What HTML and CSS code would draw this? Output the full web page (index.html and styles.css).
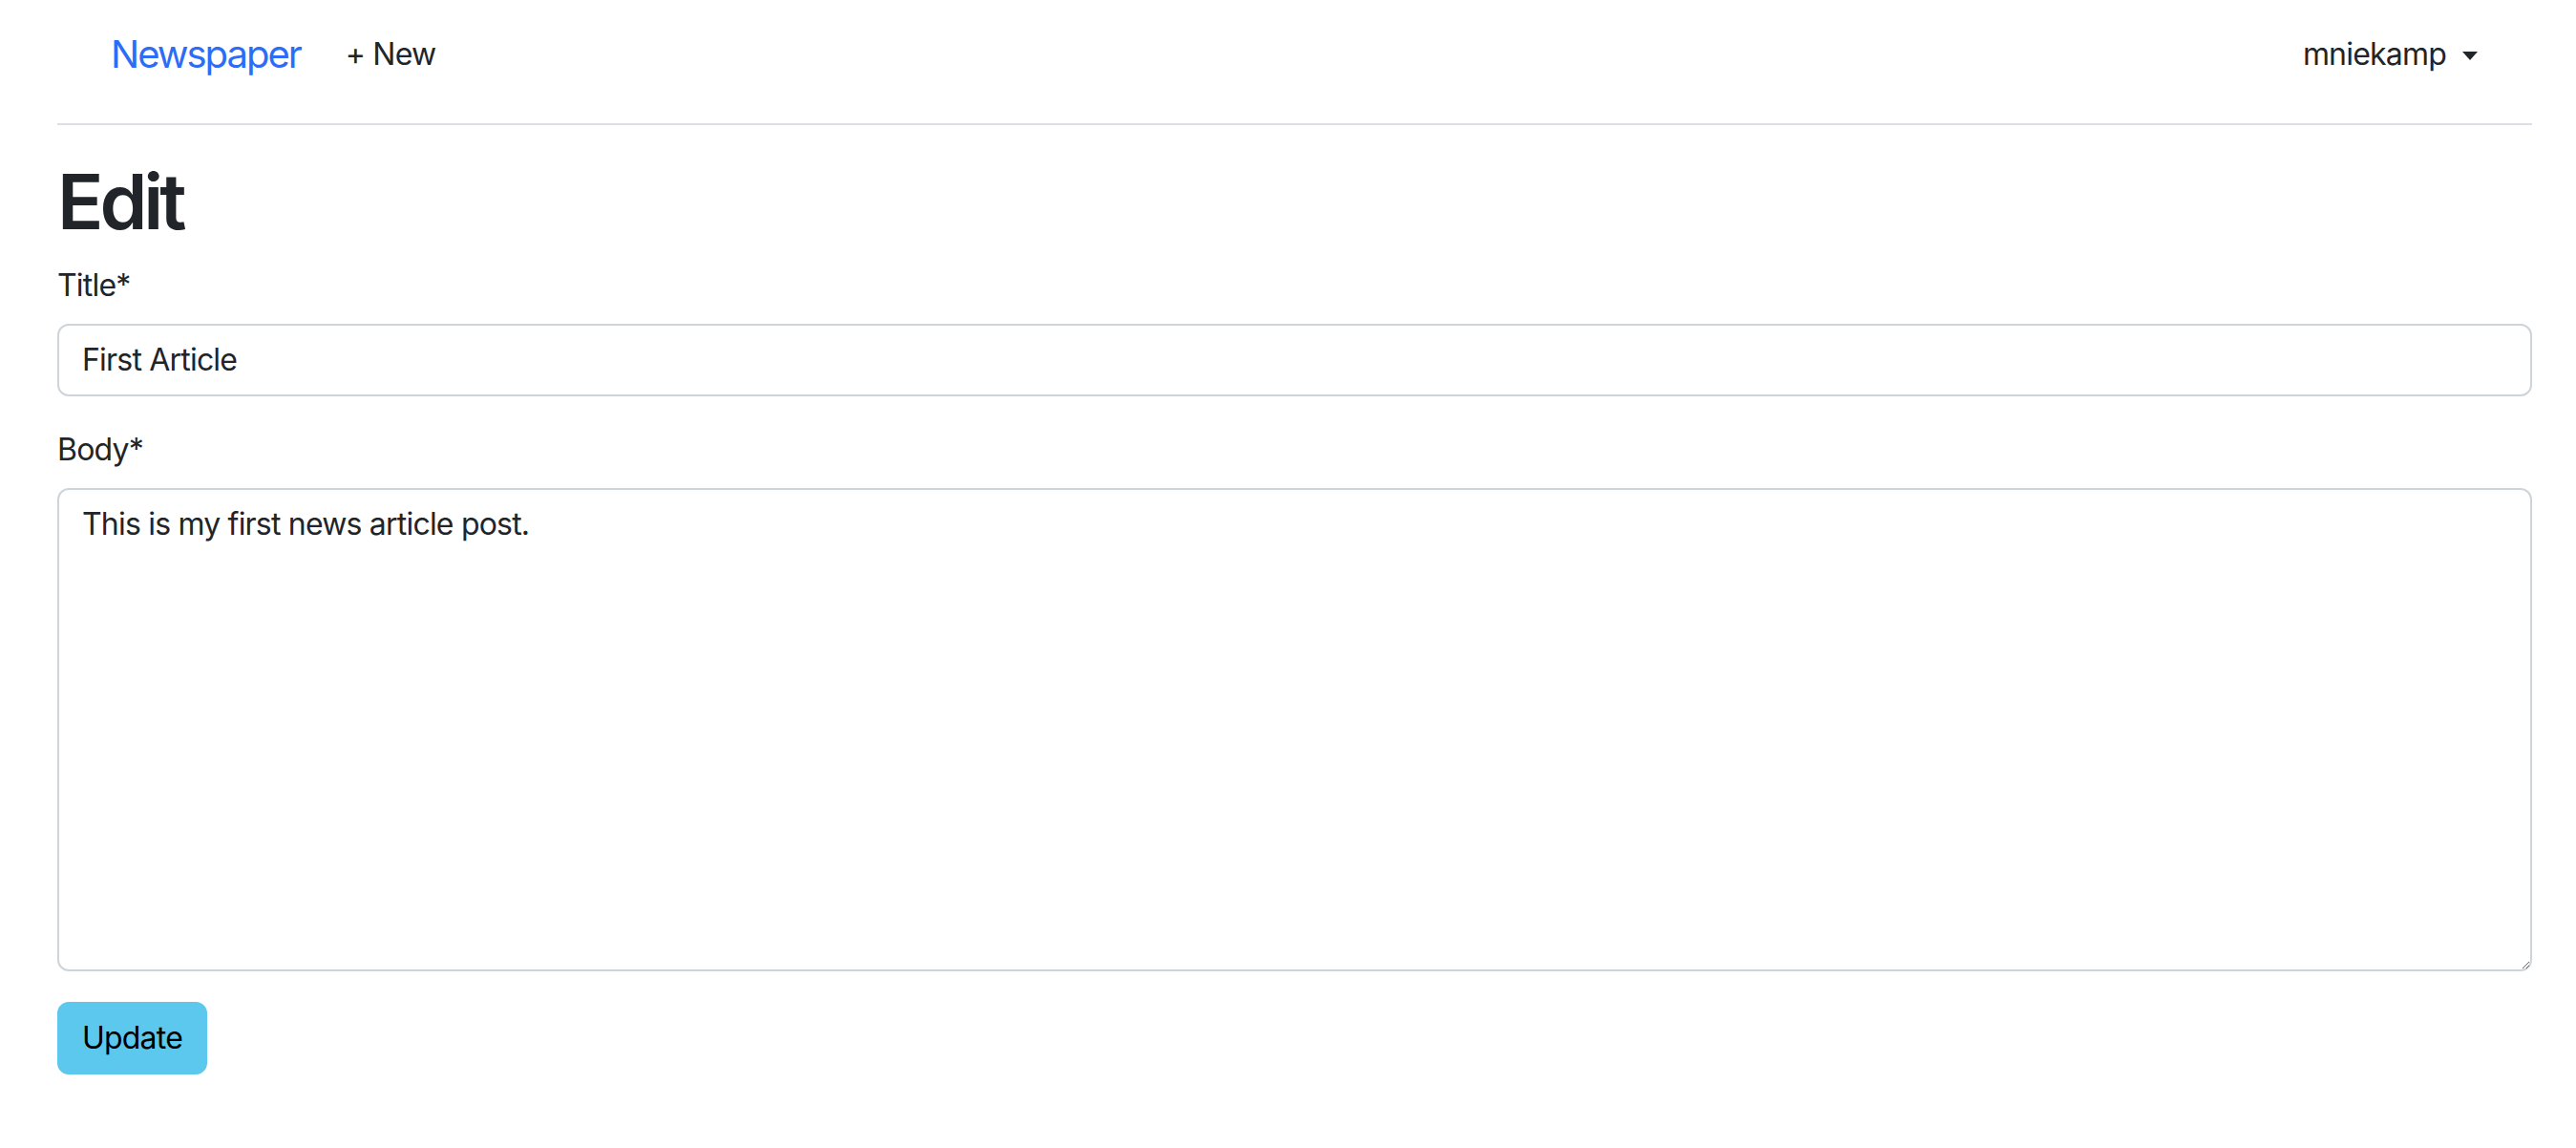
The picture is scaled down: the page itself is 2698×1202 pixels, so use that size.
FILE: index.html
```html
<!DOCTYPE html>
<html lang="en">
<head>
  <meta charset="UTF-8" />
  <meta name="viewport" content="width=device-width, initial-scale=1.0"/>
  <title>Edit</title>
  <link rel="stylesheet" href="styles.css">
</head>
<body>
  <div class="container">
    <nav class="navbar">
      <a class="brand" href="#">Newspaper</a>
      <a class="nav-link" href="#">+ New</a>
      <div class="user">
        <a class="nav-link dropdown" href="#">mniekamp<span class="caret"></span></a>
      </div>
    </nav>
    <hr>

    <h1>Edit</h1>
    <form>
      <div class="field">
        <label for="title">Title*</label>
        <input type="text" id="title" class="form-control" value="First Article" />
      </div>
      <div class="field">
        <label for="body">Body*</label>
        <textarea id="body" class="form-control body-area">This is my first news article post.</textarea>
      </div>
      <button type="submit" class="btn-update">Update</button>
    </form>
  </div>
</body>
</html>
```

FILE: styles.css
```css
body {
  margin: 0;
  font-family: Inter, "Noto Sans", sans-serif;
  font-size: 32px;
  line-height: 1.5;
  letter-spacing: -0.025em;
  color: #212529;
  background: #fff;
}
a {
  text-decoration: none;
}
.container {
  width: 2592px;
  margin-left: 60px;
}
.navbar {
  display: flex;
  align-items: center;
  padding: 27px 57px 10px 56px;
}
.brand {
  font-size: 40px;
  letter-spacing: -0.05em;
  color: #2d6cf6;
  margin-right: 47px;
}
.nav-link {
  color: #212529;
}
.user {
  margin-left: auto;
}
.caret {
  display: inline-block;
  margin-left: 17px;
  vertical-align: 5px;
  border-top: 9px solid #212529;
  border-left: 8.5px solid transparent;
  border-right: 8.5px solid transparent;
}
hr {
  margin: 32px 0;
  border: 0;
  border-top: 2px solid #dcdfe3;
}
h1 {
  margin: 0 0 16px;
  font-size: 80px;
  font-weight: 600;
  line-height: 1.2;
  letter-spacing: -0.05em;
}
.field {
  margin-bottom: 32px;
}
label {
  display: block;
  margin-bottom: 16px;
}
.form-control {
  display: block;
  box-sizing: border-box;
  width: 100%;
  padding: 12px 24px;
  font-family: inherit;
  font-size: 32px;
  line-height: 1.5;
  letter-spacing: inherit;
  color: #212529;
  background: #fff;
  border: 2px solid #ced4da;
  border-radius: 12px;
  outline: none;
}
.body-area {
  height: 506px;
  resize: vertical;
}
.btn-update {
  padding: 12px 24px;
  font-family: inherit;
  font-size: 32px;
  line-height: 1.5;
  letter-spacing: inherit;
  color: #000;
  background: #5dc8ed;
  border: 2px solid #5dc8ed;
  border-radius: 12px;
  cursor: pointer;
}
```
